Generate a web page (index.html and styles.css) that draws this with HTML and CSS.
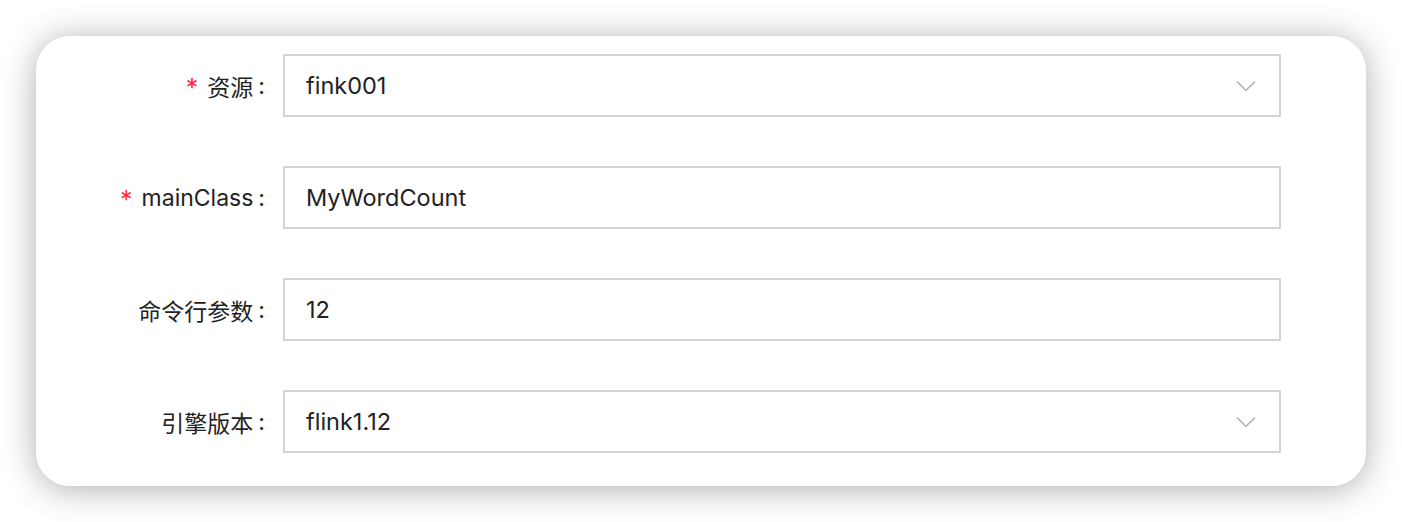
FILE: index.html
```html
<!DOCTYPE html>
<html lang="zh">
<head>
<meta charset="utf-8">
<link rel="stylesheet" href="styles.css">
</head>
<body>
<div class="card">
  <form class="form">
    <div class="row">
      <label class="label"><span class="req">*</span>资源<span class="colon">:</span></label>
      <div class="field select"><span class="value">fink001</span>
        <svg class="arrow" width="20" height="12" viewBox="0 0 20 12"><path d="M1 1.5 L10 10.5 L19 1.5" fill="none" stroke="#b0b0b0" stroke-width="1.5"/></svg>
      </div>
    </div>
    <div class="row">
      <label class="label"><span class="req">*</span>mainClass<span class="colon">:</span></label>
      <div class="field"><span class="value">MyWordCount</span></div>
    </div>
    <div class="row">
      <label class="label">命令行参数<span class="colon">:</span></label>
      <div class="field"><span class="value">12</span></div>
    </div>
    <div class="row">
      <label class="label">引擎版本<span class="colon">:</span></label>
      <div class="field select"><span class="value">flink1.12</span>
        <svg class="arrow" width="20" height="12" viewBox="0 0 20 12"><path d="M1 1.5 L10 10.5 L19 1.5" fill="none" stroke="#b0b0b0" stroke-width="1.5"/></svg>
      </div>
    </div>
  </form>
</div>
</body>
</html>
```
FILE: styles.css
```css
html, body {
  margin: 0;
  padding: 0;
  background: #ffffff;
}
body {
  width: 1402px;
  height: 522px;
  overflow: hidden;
  font-family: Inter, "Noto Sans CJK SC", sans-serif;
}
.card {
  margin: 36px 0 0 36px;
  width: 1330px;
  height: 450px;
  box-sizing: border-box;
  background: #fff;
  border-radius: 34px;
  box-shadow: 0 3px 34px rgba(0, 0, 0, 0.32);
  padding: 18px 85px 0 0;
}
.form {
  display: flex;
  flex-direction: column;
  gap: 49px;
}
.row {
  display: flex;
  align-items: center;
  height: 63px;
}
.label {
  width: 229px;
  flex: none;
  text-align: right;
  font-size: 23px;
  color: #222;
  margin-right: 18px;
  display: flex;
  justify-content: flex-end;
  align-items: center;
}
.req {
  color: #ff2d3b;
  font-size: 25px;
  margin-right: 9px;
  position: relative;
  top: 2px;
}
.colon {
  margin-left: 5px;
}
.field {
  flex: 1;
  height: 63px;
  box-sizing: border-box;
  border: 2px solid #d4d4d4;
  display: flex;
  align-items: center;
  padding: 0 21px;
  font-size: 23.5px;
  color: #222;
}
.value {
  flex: 1;
}
.arrow {
  flex: none;
  margin-right: 2px;
}
```
